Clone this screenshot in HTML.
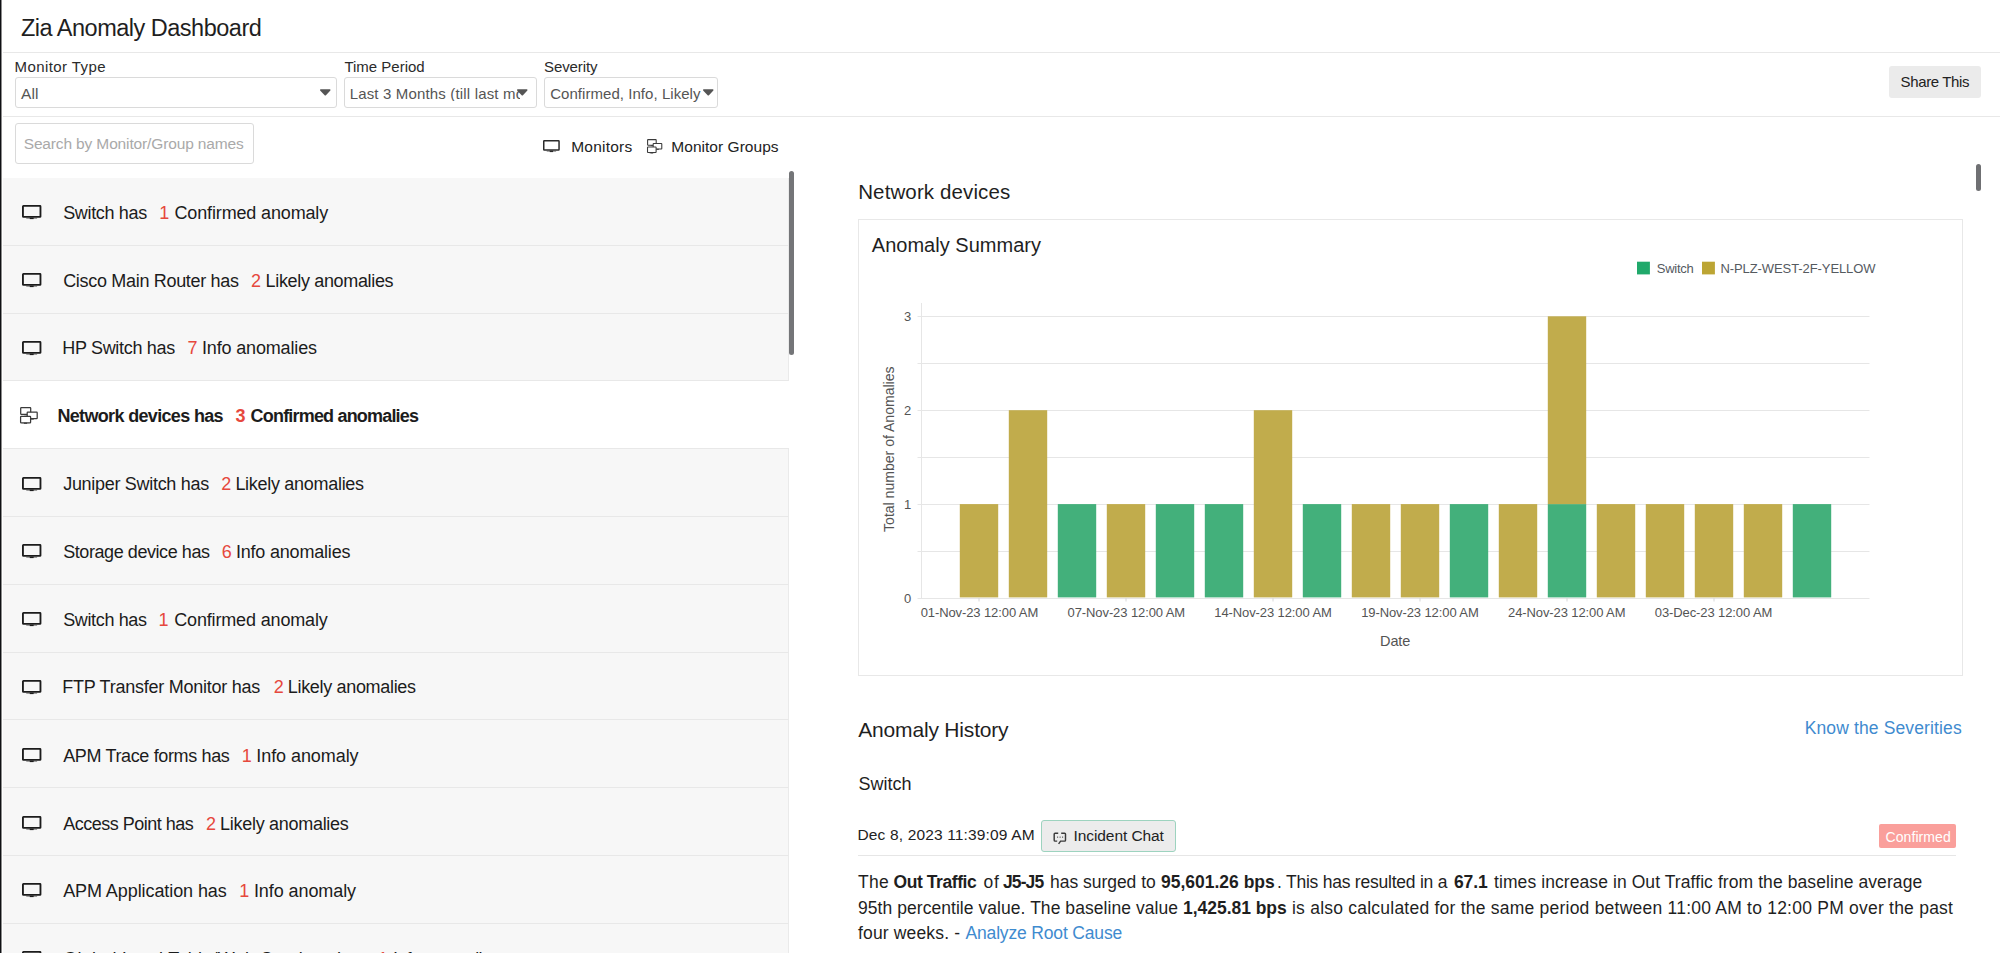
<!DOCTYPE html>
<html><head><meta charset="utf-8"><title>Zia Anomaly Dashboard</title>
<style>
html,body{margin:0;padding:0;background:#fff;}
body{width:2000px;height:953px;overflow:hidden;position:relative;font-family:"Liberation Sans", sans-serif;}
.t{position:absolute;white-space:pre;font-family:"Liberation Sans", sans-serif;}
.t b{font-weight:700;}
.lnk{color:#3f8bcf;}
.box{position:absolute;box-sizing:border-box;}
.row{position:absolute;left:3px;width:785.5px;background:#f7f7f7;box-sizing:border-box;border-bottom:1px solid #e8e8e8;border-right:1px solid #eaeaea;}
.row.white{background:#fff;border-right:none;}
.ic{position:absolute;overflow:visible;}
.hl{position:absolute;height:1px;background:#e8e8e8;}
.tri{position:absolute;width:0;height:0;border-left:5.5px solid transparent;border-right:5.5px solid transparent;border-top:6.5px solid #4a4a4a;}
</style></head><body>
<div class="box" style="left:0;top:0;width:1.2px;height:953px;background:#0f1013"></div><div class="box" style="left:1.2px;top:0;width:1px;height:953px;background:#8c8c8c"></div>
<div class="hl" style="left:3px;top:52px;width:1997px"></div>
<div class="box" style="left:15px;top:77px;width:322px;height:31px;border:1px solid #dadada;border-radius:3px"></div>
<div class="box" style="left:344px;top:77px;width:193px;height:31px;border:1px solid #dadada;border-radius:3px;overflow:hidden"></div>
<div class="box" style="left:543.8px;top:77px;width:174px;height:31px;border:1px solid #dadada;border-radius:3px"></div>
<div class="hl" style="left:3px;top:116px;width:1997px"></div>
<div class="box" style="left:1889px;top:66px;width:91.5px;height:32px;background:#ebebeb;border-radius:3px"></div>
<div class="box" style="left:15px;top:122.5px;width:238.5px;height:41.5px;border:1px solid #dadada;border-radius:3px"></div>
<div class="row" style="top:178.00px;height:67.80px"></div>
<div class="row" style="top:245.80px;height:67.80px"></div>
<div class="row" style="top:313.60px;height:67.80px"></div>
<div class="row white" style="top:381.40px;height:67.80px"></div>
<div class="row" style="top:449.20px;height:67.80px"></div>
<div class="row" style="top:517.00px;height:67.80px"></div>
<div class="row" style="top:584.80px;height:67.80px"></div>
<div class="row" style="top:652.60px;height:67.80px"></div>
<div class="row" style="top:720.40px;height:67.80px"></div>
<div class="row" style="top:788.20px;height:67.80px"></div>
<div class="row" style="top:856.00px;height:67.80px"></div>
<div class="row" style="top:923.80px;height:67.80px"></div>
<div class="box" style="left:788.8px;top:170.5px;width:5px;height:184.5px;background:#747578;border-radius:3px"></div>
<div class="box" style="left:1976px;top:164px;width:5px;height:26.5px;background:#6f7073;border-radius:3px"></div>
<div class="box" style="left:858px;top:219px;width:1105px;height:457px;border:1px solid #e8e8e8"></div>
<svg style="position:absolute;left:0;top:0" width="2000" height="953">
<line x1="917.5" y1="598.5" x2="1869.5" y2="598.5" stroke="#e6e6e6" stroke-width="1"/>
<line x1="917.5" y1="551.5" x2="1869.5" y2="551.5" stroke="#e6e6e6" stroke-width="1"/>
<line x1="917.5" y1="504.5" x2="1869.5" y2="504.5" stroke="#e6e6e6" stroke-width="1"/>
<line x1="917.5" y1="457.5" x2="1869.5" y2="457.5" stroke="#e6e6e6" stroke-width="1"/>
<line x1="917.5" y1="410.5" x2="1869.5" y2="410.5" stroke="#e6e6e6" stroke-width="1"/>
<line x1="917.5" y1="363.5" x2="1869.5" y2="363.5" stroke="#e6e6e6" stroke-width="1"/>
<line x1="917.5" y1="316.5" x2="1869.5" y2="316.5" stroke="#e6e6e6" stroke-width="1"/>
<line x1="921.5" y1="303" x2="921.5" y2="598.0" stroke="#e6e6e6" stroke-width="1"/>
<rect x="959.80" y="504.10" width="38.4" height="93.30" fill="#c1ac4c"/>
<rect x="1008.80" y="410.20" width="38.4" height="187.20" fill="#c1ac4c"/>
<rect x="1057.80" y="504.10" width="38.4" height="93.30" fill="#43b07b"/>
<rect x="1106.80" y="504.10" width="38.4" height="93.30" fill="#c1ac4c"/>
<rect x="1155.80" y="504.10" width="38.4" height="93.30" fill="#43b07b"/>
<rect x="1204.80" y="504.10" width="38.4" height="93.30" fill="#43b07b"/>
<rect x="1253.80" y="410.20" width="38.4" height="187.20" fill="#c1ac4c"/>
<rect x="1302.80" y="504.10" width="38.4" height="93.30" fill="#43b07b"/>
<rect x="1351.80" y="504.10" width="38.4" height="93.30" fill="#c1ac4c"/>
<rect x="1400.80" y="504.10" width="38.4" height="93.30" fill="#c1ac4c"/>
<rect x="1449.80" y="504.10" width="38.4" height="93.30" fill="#43b07b"/>
<rect x="1498.80" y="504.10" width="38.4" height="93.30" fill="#c1ac4c"/>
<rect x="1547.80" y="504.10" width="38.4" height="93.30" fill="#43b07b"/>
<rect x="1547.80" y="316.30" width="38.4" height="187.80" fill="#c1ac4c"/>
<rect x="1596.80" y="504.10" width="38.4" height="93.30" fill="#c1ac4c"/>
<rect x="1645.80" y="504.10" width="38.4" height="93.30" fill="#c1ac4c"/>
<rect x="1694.80" y="504.10" width="38.4" height="93.30" fill="#c1ac4c"/>
<rect x="1743.80" y="504.10" width="38.4" height="93.30" fill="#c1ac4c"/>
<rect x="1792.80" y="504.10" width="38.4" height="93.30" fill="#43b07b"/>
<line x1="979.0" y1="598.0" x2="979.0" y2="601.5" stroke="#d8d8d8" stroke-width="1"/>
<line x1="1126.0" y1="598.0" x2="1126.0" y2="601.5" stroke="#d8d8d8" stroke-width="1"/>
<line x1="1273.0" y1="598.0" x2="1273.0" y2="601.5" stroke="#d8d8d8" stroke-width="1"/>
<line x1="1420.0" y1="598.0" x2="1420.0" y2="601.5" stroke="#d8d8d8" stroke-width="1"/>
<line x1="1567.0" y1="598.0" x2="1567.0" y2="601.5" stroke="#d8d8d8" stroke-width="1"/>
<line x1="1714.0" y1="598.0" x2="1714.0" y2="601.5" stroke="#d8d8d8" stroke-width="1"/>
<rect x="1637" y="261.7" width="12.9" height="12.7" fill="#20a96b"/>
<rect x="1702" y="261.7" width="12.9" height="12.7" fill="#bca534"/>
<text x="0" y="0" transform="translate(894.3,449.2) rotate(-90)" text-anchor="middle" font-family="Liberation Sans" font-size="14" fill="#545454" textLength="165.5" lengthAdjust="spacingAndGlyphs">Total number of Anomalies</text>
</svg>
<div class="hl" style="left:858px;top:855px;width:1098px;background:#e6e6e6"></div>
<div class="box" style="left:1041.3px;top:819.8px;width:134.4px;height:32.6px;background:#ececec;border:1px solid #9dd3bf;border-radius:3px"></div>
<svg class="ic" style="left:1053px;top:831.5px" width="14" height="13" viewBox="0 0 14 13">
<path d="M5.2 1.2 H2.1 Q1.2 1.2 1.2 2.1 V8.2 Q1.2 9.1 2.1 9.1 H4.2" fill="none" stroke="#3a3a3a" stroke-width="1.45"/>
<path d="M8.2 1.2 H11.6 Q12.5 1.2 12.5 2.1 V8.2 Q12.5 9.1 11.6 9.1 H7.6 L5.6 11.9" fill="none" stroke="#3a3a3a" stroke-width="1.45"/>
<circle cx="4.6" cy="5.1" r="0.65" fill="#3a3a3a"/><circle cx="7.1" cy="5.1" r="0.65" fill="#3a3a3a"/><circle cx="9.6" cy="5.1" r="0.65" fill="#3a3a3a"/>
</svg>
<div class="box" style="left:1879px;top:824px;width:77.3px;height:24px;background:#fa9f9b;border-radius:2px"></div>
<svg class="ic" style="left:319.8px;top:89px" width="11" height="7" viewBox="0 0 11 7"><path d="M0.3 0.3 H10.1 Q10.4 0.3 10.4 0.8 V1.4 L5.7 6.6 H4.9 L0.1 1.4 V0.8 Q0.1 0.3 0.5 0.3 Z" fill="#555"/></svg>
<div class="t" style="left:21.00px;top:16.75px;font-size:23.5px;line-height:23.5px;font-weight:400;color:#1f1f1f;letter-spacing:-0.501px;">Zia Anomaly Dashboard</div>
<div class="t" style="left:14.50px;top:59.30px;font-size:15px;line-height:15px;font-weight:400;color:#2b2b2b;letter-spacing:0.422px;">Monitor Type</div>
<div class="t" style="left:344.40px;top:58.70px;font-size:15px;line-height:15px;font-weight:400;color:#2b2b2b;letter-spacing:-0.006px;">Time Period</div>
<div class="t" style="left:544.00px;top:59.30px;font-size:15px;line-height:15px;font-weight:400;color:#2b2b2b;letter-spacing:-0.098px;">Severity</div>
<div class="t" style="left:21.00px;top:85.55px;font-size:15.5px;line-height:15.5px;font-weight:400;color:#555;letter-spacing:0.109px;">All</div>
<div class="t" style="left:349.70px;top:86.40px;font-size:15px;line-height:15px;font-weight:400;color:#555;letter-spacing:0.163px;width:170.3px;overflow:hidden">Last 3 Months (till last months)</div>
<div class="t" style="left:550.20px;top:85.90px;font-size:15px;line-height:15px;font-weight:400;color:#555;letter-spacing:0.049px;">Confirmed, Info, Likely</div>
<div class="t" style="left:1900.60px;top:74.20px;font-size:15px;line-height:15px;font-weight:400;color:#222;letter-spacing:-0.370px;">Share This</div>
<div class="t" style="left:23.70px;top:135.75px;font-size:15.5px;line-height:15.5px;font-weight:400;color:#a9a9a9;letter-spacing:-0.141px;">Search by Monitor/Group names</div>
<div class="t" style="left:571.20px;top:139.25px;font-size:15.5px;line-height:15.5px;font-weight:400;color:#222;letter-spacing:0.231px;">Monitors</div>
<div class="t" style="left:671.30px;top:139.25px;font-size:15.5px;line-height:15.5px;font-weight:400;color:#222;letter-spacing:0.033px;">Monitor Groups</div>
<div class="t" style="left:63.20px;top:204.00px;font-size:18px;line-height:18px;font-weight:400;color:#1c1c1c;letter-spacing:-0.338px;">Switch has</div>
<div class="t" style="left:159.20px;top:204.00px;font-size:18px;line-height:18px;font-weight:400;color:#e6483d;letter-spacing:0.000px;">1</div>
<div class="t" style="left:174.50px;top:204.00px;font-size:18px;line-height:18px;font-weight:400;color:#1c1c1c;letter-spacing:-0.148px;">Confirmed anomaly</div>
<div class="t" style="left:63.20px;top:272.00px;font-size:18px;line-height:18px;font-weight:400;color:#1c1c1c;letter-spacing:-0.314px;">Cisco Main Router has</div>
<div class="t" style="left:251.00px;top:272.00px;font-size:18px;line-height:18px;font-weight:400;color:#e6483d;letter-spacing:0.000px;">2</div>
<div class="t" style="left:265.60px;top:272.00px;font-size:18px;line-height:18px;font-weight:400;color:#1c1c1c;letter-spacing:-0.338px;">Likely anomalies</div>
<div class="t" style="left:62.20px;top:339.00px;font-size:18px;line-height:18px;font-weight:400;color:#1c1c1c;letter-spacing:-0.304px;">HP Switch has</div>
<div class="t" style="left:187.60px;top:339.00px;font-size:18px;line-height:18px;font-weight:400;color:#e6483d;letter-spacing:0.000px;">7</div>
<div class="t" style="left:202.00px;top:339.00px;font-size:18px;line-height:18px;font-weight:400;color:#1c1c1c;letter-spacing:-0.159px;">Info anomalies</div>
<div class="t" style="left:57.40px;top:407.00px;font-size:18px;line-height:18px;font-weight:700;color:#1c1c1c;letter-spacing:-0.660px;">Network devices has</div>
<div class="t" style="left:235.60px;top:407.00px;font-size:18px;line-height:18px;font-weight:700;color:#e6483d;letter-spacing:0.000px;">3</div>
<div class="t" style="left:250.60px;top:407.00px;font-size:18px;line-height:18px;font-weight:700;color:#1c1c1c;letter-spacing:-0.813px;">Confirmed anomalies</div>
<div class="t" style="left:63.20px;top:475.20px;font-size:18px;line-height:18px;font-weight:400;color:#1c1c1c;letter-spacing:-0.299px;">Juniper Switch has</div>
<div class="t" style="left:221.30px;top:475.20px;font-size:18px;line-height:18px;font-weight:400;color:#e6483d;letter-spacing:0.000px;">2</div>
<div class="t" style="left:235.40px;top:475.20px;font-size:18px;line-height:18px;font-weight:400;color:#1c1c1c;letter-spacing:-0.291px;">Likely anomalies</div>
<div class="t" style="left:63.20px;top:543.20px;font-size:18px;line-height:18px;font-weight:400;color:#1c1c1c;letter-spacing:-0.429px;">Storage device has</div>
<div class="t" style="left:221.80px;top:543.20px;font-size:18px;line-height:18px;font-weight:400;color:#e6483d;letter-spacing:0.000px;">6</div>
<div class="t" style="left:235.90px;top:543.20px;font-size:18px;line-height:18px;font-weight:400;color:#1c1c1c;letter-spacing:-0.190px;">Info anomalies</div>
<div class="t" style="left:63.20px;top:610.70px;font-size:18px;line-height:18px;font-weight:400;color:#1c1c1c;letter-spacing:-0.360px;">Switch has</div>
<div class="t" style="left:158.60px;top:610.70px;font-size:18px;line-height:18px;font-weight:400;color:#e6483d;letter-spacing:0.000px;">1</div>
<div class="t" style="left:174.20px;top:610.70px;font-size:18px;line-height:18px;font-weight:400;color:#1c1c1c;letter-spacing:-0.154px;">Confirmed anomaly</div>
<div class="t" style="left:62.20px;top:678.00px;font-size:18px;line-height:18px;font-weight:400;color:#1c1c1c;letter-spacing:-0.243px;">FTP Transfer Monitor has</div>
<div class="t" style="left:273.70px;top:678.00px;font-size:18px;line-height:18px;font-weight:400;color:#e6483d;letter-spacing:0.000px;">2</div>
<div class="t" style="left:287.80px;top:678.00px;font-size:18px;line-height:18px;font-weight:400;color:#1c1c1c;letter-spacing:-0.324px;">Likely anomalies</div>
<div class="t" style="left:63.20px;top:747.00px;font-size:18px;line-height:18px;font-weight:400;color:#1c1c1c;letter-spacing:-0.354px;">APM Trace forms has</div>
<div class="t" style="left:241.70px;top:747.00px;font-size:18px;line-height:18px;font-weight:400;color:#e6483d;letter-spacing:0.000px;">1</div>
<div class="t" style="left:256.30px;top:747.00px;font-size:18px;line-height:18px;font-weight:400;color:#1c1c1c;letter-spacing:-0.069px;">Info anomaly</div>
<div class="t" style="left:63.20px;top:815.00px;font-size:18px;line-height:18px;font-weight:400;color:#1c1c1c;letter-spacing:-0.498px;">Access Point has</div>
<div class="t" style="left:206.00px;top:815.00px;font-size:18px;line-height:18px;font-weight:400;color:#e6483d;letter-spacing:0.000px;">2</div>
<div class="t" style="left:220.10px;top:815.00px;font-size:18px;line-height:18px;font-weight:400;color:#1c1c1c;letter-spacing:-0.291px;">Likely anomalies</div>
<div class="t" style="left:63.20px;top:882.30px;font-size:18px;line-height:18px;font-weight:400;color:#1c1c1c;letter-spacing:-0.083px;">APM Application has</div>
<div class="t" style="left:239.20px;top:882.30px;font-size:18px;line-height:18px;font-weight:400;color:#e6483d;letter-spacing:0.000px;">1</div>
<div class="t" style="left:253.90px;top:882.30px;font-size:18px;line-height:18px;font-weight:400;color:#1c1c1c;letter-spacing:-0.078px;">Info anomaly</div>
<div class="t" style="left:63.20px;top:950.00px;font-size:18px;line-height:18px;font-weight:400;color:#1c1c1c;letter-spacing:0.272px;">Global Load Table/Web Services has</div>
<div class="t" style="left:378.00px;top:950.00px;font-size:18px;line-height:18px;font-weight:400;color:#e6483d;letter-spacing:0.000px;">1</div>
<div class="t" style="left:393.00px;top:950.00px;font-size:18px;line-height:18px;font-weight:400;color:#1c1c1c;letter-spacing:-0.775px;">Info anomalies</div>
<div class="t" style="left:858.20px;top:182.35px;font-size:20.5px;line-height:20.5px;font-weight:400;color:#1f1f1f;letter-spacing:0.119px;">Network devices</div>
<div class="t" style="left:871.80px;top:234.80px;font-size:20px;line-height:20px;font-weight:400;color:#1f1f1f;letter-spacing:0.019px;">Anomaly Summary</div>
<div class="t" style="left:1656.80px;top:262.00px;font-size:13px;line-height:13px;font-weight:400;color:#555a5f;letter-spacing:-0.272px;">Switch</div>
<div class="t" style="left:1720.40px;top:262.20px;font-size:13px;line-height:13px;font-weight:400;color:#555a5f;letter-spacing:-0.082px;">N-PLZ-WEST-2F-YELLOW</div>
<div class="t" style="left:858.30px;top:718.70px;font-size:21px;line-height:21px;font-weight:400;color:#1f1f1f;letter-spacing:-0.184px;">Anomaly History</div>
<div class="t" style="left:1804.70px;top:720.05px;font-size:17.5px;line-height:17.5px;font-weight:400;color:#3f8bcf;letter-spacing:0.127px;">Know the Severities</div>
<div class="t" style="left:858.50px;top:774.80px;font-size:18px;line-height:18px;font-weight:400;color:#1f1f1f;letter-spacing:-0.021px;">Switch</div>
<div class="t" style="left:857.50px;top:827.35px;font-size:15.5px;line-height:15.5px;font-weight:400;color:#222;letter-spacing:0.149px;">Dec 8, 2023 11:39:09 AM</div>
<div class="t" style="left:1073.50px;top:828.25px;font-size:15.5px;line-height:15.5px;font-weight:400;color:#222;letter-spacing:-0.077px;">Incident Chat</div>
<div class="t" style="left:1885.50px;top:829.80px;font-size:14px;line-height:14px;font-weight:400;color:#ffffff;letter-spacing:0.088px;">Confirmed</div>
<div class="t" style="left:920.70px;top:606.10px;font-size:13px;line-height:13px;font-weight:400;color:#545454;letter-spacing:-0.101px;">01-Nov-23 12:00 AM</div>
<div class="t" style="left:1067.60px;top:606.10px;font-size:13px;line-height:13px;font-weight:400;color:#545454;letter-spacing:-0.101px;">07-Nov-23 12:00 AM</div>
<div class="t" style="left:1214.30px;top:606.10px;font-size:13px;line-height:13px;font-weight:400;color:#545454;letter-spacing:-0.101px;">14-Nov-23 12:00 AM</div>
<div class="t" style="left:1361.20px;top:606.10px;font-size:13px;line-height:13px;font-weight:400;color:#545454;letter-spacing:-0.101px;">19-Nov-23 12:00 AM</div>
<div class="t" style="left:1508.00px;top:606.10px;font-size:13px;line-height:13px;font-weight:400;color:#545454;letter-spacing:-0.101px;">24-Nov-23 12:00 AM</div>
<div class="t" style="left:1654.80px;top:606.10px;font-size:13px;line-height:13px;font-weight:400;color:#545454;letter-spacing:-0.101px;">03-Dec-23 12:00 AM</div>
<div class="t" style="left:1380.10px;top:633.55px;font-size:14.5px;line-height:14.5px;font-weight:400;color:#545454;letter-spacing:-0.155px;">Date</div>
<div class="t" style="left:904.00px;top:310.00px;font-size:13px;line-height:13px;font-weight:400;color:#545454;letter-spacing:0.000px;">3</div>
<div class="t" style="left:904.00px;top:404.20px;font-size:13px;line-height:13px;font-weight:400;color:#545454;letter-spacing:0.000px;">2</div>
<div class="t" style="left:904.00px;top:498.00px;font-size:13px;line-height:13px;font-weight:400;color:#545454;letter-spacing:0.000px;">1</div>
<div class="t" style="left:904.00px;top:591.60px;font-size:13px;line-height:13px;font-weight:400;color:#545454;letter-spacing:0.000px;">0</div>
<div class="t" style="left:858.00px;top:873.85px;font-size:17.5px;line-height:17.5px;font-weight:400;color:#1f1f1f;letter-spacing:0.289px;">The</div>
<div class="t" style="left:893.60px;top:873.85px;font-size:17.5px;line-height:17.5px;font-weight:700;color:#1f1f1f;letter-spacing:-0.438px;">Out Traffic</div>
<div class="t" style="left:983.60px;top:873.85px;font-size:17.5px;line-height:17.5px;font-weight:400;color:#1f1f1f;letter-spacing:0.667px;">of</div>
<div class="t" style="left:1003.00px;top:873.85px;font-size:17.5px;line-height:17.5px;font-weight:700;color:#1f1f1f;letter-spacing:-0.906px;">J5-J5</div>
<div class="t" style="left:1050.00px;top:873.85px;font-size:17.5px;line-height:17.5px;font-weight:400;color:#1f1f1f;letter-spacing:-0.026px;">has surged to</div>
<div class="t" style="left:1161.00px;top:873.85px;font-size:17.5px;line-height:17.5px;font-weight:700;color:#1f1f1f;letter-spacing:-0.008px;">95,601.26 bps</div>
<div class="t" style="left:1277.00px;top:873.85px;font-size:17.5px;line-height:17.5px;font-weight:400;color:#1f1f1f;letter-spacing:-0.232px;">. This has resulted in a</div>
<div class="t" style="left:1454.00px;top:873.85px;font-size:17.5px;line-height:17.5px;font-weight:700;color:#1f1f1f;letter-spacing:-0.109px;">67.1</div>
<div class="t" style="left:1494.00px;top:873.85px;font-size:17.5px;line-height:17.5px;font-weight:400;color:#1f1f1f;letter-spacing:0.082px;">times increase in Out Traffic from the baseline average</div>
<div class="t" style="left:858.00px;top:899.55px;font-size:17.5px;line-height:17.5px;font-weight:400;color:#1f1f1f;letter-spacing:0.053px;">95th percentile value. The baseline value</div>
<div class="t" style="left:1183.00px;top:899.55px;font-size:17.5px;line-height:17.5px;font-weight:700;color:#1f1f1f;letter-spacing:-0.033px;">1,425.81 bps</div>
<div class="t" style="left:1292.00px;top:899.55px;font-size:17.5px;line-height:17.5px;font-weight:400;color:#1f1f1f;letter-spacing:0.228px;">is also calculated for the same period between 11:00 AM to 12:00 PM over the past</div>
<div class="t" style="left:858.00px;top:925.45px;font-size:17.5px;line-height:17.5px;font-weight:400;color:#1f1f1f;letter-spacing:0.155px;">four weeks. -</div>
<div class="t" style="left:965.50px;top:925.45px;font-size:17.5px;line-height:17.5px;font-weight:400;color:#3f8bcf;letter-spacing:-0.165px;">Analyze Root Cause</div>
<svg class="ic" style="left:517px;top:89.2px" width="11" height="7" viewBox="0 0 11 7"><path d="M0.3 0.3 H10.1 Q10.4 0.3 10.4 0.8 V1.4 L5.7 6.6 H4.9 L0.1 1.4 V0.8 Q0.1 0.3 0.5 0.3 Z" fill="#555"/></svg>
<svg class="ic" style="left:703px;top:89.3px" width="11" height="7" viewBox="0 0 11 7"><path d="M0.3 0.3 H10.1 Q10.4 0.3 10.4 0.8 V1.4 L5.7 6.6 H4.9 L0.1 1.4 V0.8 Q0.1 0.3 0.5 0.3 Z" fill="#555"/></svg>
<svg class="ic" style="left:542.20px;top:140.00px" width="18.80" height="14.80" viewBox="0 0 18.80 14.80"><rect x="1.75" y="0.75" width="15.30" height="9.30" rx="0.5" fill="none" stroke="#2a2a2a" stroke-width="1.5"/><rect x="4.70" y="10.80" width="9.41" height="1.2" fill="#2a2a2a" opacity="0.4"/><rect x="7.72" y="10.60" width="3.36" height="1.5" fill="#2a2a2a"/></svg>
<svg class="ic" style="left:646.5px;top:138.7px" width="15.48" height="14.62" viewBox="0 0 18 17"><rect x="0.7" y="0.7" width="10" height="6.6" rx="0.6" fill="#fff" stroke="#3a3a3a" stroke-width="1.25"/><rect x="4.3" y="7.2" width="3" height="1.1" fill="#3a3a3a"/><rect x="7.2" y="5.2" width="10" height="6.4" rx="0.6" fill="#fff" stroke="#3a3a3a" stroke-width="1.25"/><rect x="10.8" y="11.5" width="3" height="1.1" fill="#3a3a3a"/><rect x="0.6" y="9.4" width="10" height="6.4" rx="0.6" fill="#fff" stroke="#3a3a3a" stroke-width="1.25"/><rect x="4" y="15.7" width="3" height="1.1" fill="#3a3a3a"/><rect x="2.5" y="16.3" width="6" height="0.6" fill="#3a3a3a" opacity="0.3"/></svg>
<svg class="ic" style="left:20.60px;top:205.30px" width="21.40" height="16.80" viewBox="0 0 21.40 16.80"><rect x="1.93" y="0.93" width="17.55" height="10.95" rx="0.5" fill="none" stroke="#1c1c1c" stroke-width="1.85"/><rect x="5.27" y="12.80" width="10.86" height="1.2" fill="#1c1c1c" opacity="0.4"/><rect x="8.76" y="12.60" width="3.88" height="1.5" fill="#1c1c1c"/></svg>
<svg class="ic" style="left:20.60px;top:273.10px" width="21.40" height="16.80" viewBox="0 0 21.40 16.80"><rect x="1.93" y="0.93" width="17.55" height="10.95" rx="0.5" fill="none" stroke="#1c1c1c" stroke-width="1.85"/><rect x="5.27" y="12.80" width="10.86" height="1.2" fill="#1c1c1c" opacity="0.4"/><rect x="8.76" y="12.60" width="3.88" height="1.5" fill="#1c1c1c"/></svg>
<svg class="ic" style="left:20.60px;top:340.90px" width="21.40" height="16.80" viewBox="0 0 21.40 16.80"><rect x="1.93" y="0.93" width="17.55" height="10.95" rx="0.5" fill="none" stroke="#1c1c1c" stroke-width="1.85"/><rect x="5.27" y="12.80" width="10.86" height="1.2" fill="#1c1c1c" opacity="0.4"/><rect x="8.76" y="12.60" width="3.88" height="1.5" fill="#1c1c1c"/></svg>
<svg class="ic" style="left:19.6px;top:406.9px" width="18.00" height="17.00" viewBox="0 0 18 17"><rect x="0.7" y="0.7" width="10" height="6.6" rx="0.6" fill="#fff" stroke="#3a3a3a" stroke-width="1.25"/><rect x="4.3" y="7.2" width="3" height="1.1" fill="#3a3a3a"/><rect x="7.2" y="5.2" width="10" height="6.4" rx="0.6" fill="#fff" stroke="#3a3a3a" stroke-width="1.25"/><rect x="10.8" y="11.5" width="3" height="1.1" fill="#3a3a3a"/><rect x="0.6" y="9.4" width="10" height="6.4" rx="0.6" fill="#fff" stroke="#3a3a3a" stroke-width="1.25"/><rect x="4" y="15.7" width="3" height="1.1" fill="#3a3a3a"/><rect x="2.5" y="16.3" width="6" height="0.6" fill="#3a3a3a" opacity="0.3"/></svg>
<svg class="ic" style="left:20.60px;top:476.50px" width="21.40" height="16.80" viewBox="0 0 21.40 16.80"><rect x="1.93" y="0.93" width="17.55" height="10.95" rx="0.5" fill="none" stroke="#1c1c1c" stroke-width="1.85"/><rect x="5.27" y="12.80" width="10.86" height="1.2" fill="#1c1c1c" opacity="0.4"/><rect x="8.76" y="12.60" width="3.88" height="1.5" fill="#1c1c1c"/></svg>
<svg class="ic" style="left:20.60px;top:544.30px" width="21.40" height="16.80" viewBox="0 0 21.40 16.80"><rect x="1.93" y="0.93" width="17.55" height="10.95" rx="0.5" fill="none" stroke="#1c1c1c" stroke-width="1.85"/><rect x="5.27" y="12.80" width="10.86" height="1.2" fill="#1c1c1c" opacity="0.4"/><rect x="8.76" y="12.60" width="3.88" height="1.5" fill="#1c1c1c"/></svg>
<svg class="ic" style="left:20.60px;top:612.10px" width="21.40" height="16.80" viewBox="0 0 21.40 16.80"><rect x="1.93" y="0.93" width="17.55" height="10.95" rx="0.5" fill="none" stroke="#1c1c1c" stroke-width="1.85"/><rect x="5.27" y="12.80" width="10.86" height="1.2" fill="#1c1c1c" opacity="0.4"/><rect x="8.76" y="12.60" width="3.88" height="1.5" fill="#1c1c1c"/></svg>
<svg class="ic" style="left:20.60px;top:679.90px" width="21.40" height="16.80" viewBox="0 0 21.40 16.80"><rect x="1.93" y="0.93" width="17.55" height="10.95" rx="0.5" fill="none" stroke="#1c1c1c" stroke-width="1.85"/><rect x="5.27" y="12.80" width="10.86" height="1.2" fill="#1c1c1c" opacity="0.4"/><rect x="8.76" y="12.60" width="3.88" height="1.5" fill="#1c1c1c"/></svg>
<svg class="ic" style="left:20.60px;top:747.70px" width="21.40" height="16.80" viewBox="0 0 21.40 16.80"><rect x="1.93" y="0.93" width="17.55" height="10.95" rx="0.5" fill="none" stroke="#1c1c1c" stroke-width="1.85"/><rect x="5.27" y="12.80" width="10.86" height="1.2" fill="#1c1c1c" opacity="0.4"/><rect x="8.76" y="12.60" width="3.88" height="1.5" fill="#1c1c1c"/></svg>
<svg class="ic" style="left:20.60px;top:815.50px" width="21.40" height="16.80" viewBox="0 0 21.40 16.80"><rect x="1.93" y="0.93" width="17.55" height="10.95" rx="0.5" fill="none" stroke="#1c1c1c" stroke-width="1.85"/><rect x="5.27" y="12.80" width="10.86" height="1.2" fill="#1c1c1c" opacity="0.4"/><rect x="8.76" y="12.60" width="3.88" height="1.5" fill="#1c1c1c"/></svg>
<svg class="ic" style="left:20.60px;top:883.30px" width="21.40" height="16.80" viewBox="0 0 21.40 16.80"><rect x="1.93" y="0.93" width="17.55" height="10.95" rx="0.5" fill="none" stroke="#1c1c1c" stroke-width="1.85"/><rect x="5.27" y="12.80" width="10.86" height="1.2" fill="#1c1c1c" opacity="0.4"/><rect x="8.76" y="12.60" width="3.88" height="1.5" fill="#1c1c1c"/></svg>
<svg class="ic" style="left:20.60px;top:951.10px" width="21.40" height="16.80" viewBox="0 0 21.40 16.80"><rect x="1.93" y="0.93" width="17.55" height="10.95" rx="0.5" fill="none" stroke="#1c1c1c" stroke-width="1.85"/><rect x="5.27" y="12.80" width="10.86" height="1.2" fill="#1c1c1c" opacity="0.4"/><rect x="8.76" y="12.60" width="3.88" height="1.5" fill="#1c1c1c"/></svg>
</body></html>
